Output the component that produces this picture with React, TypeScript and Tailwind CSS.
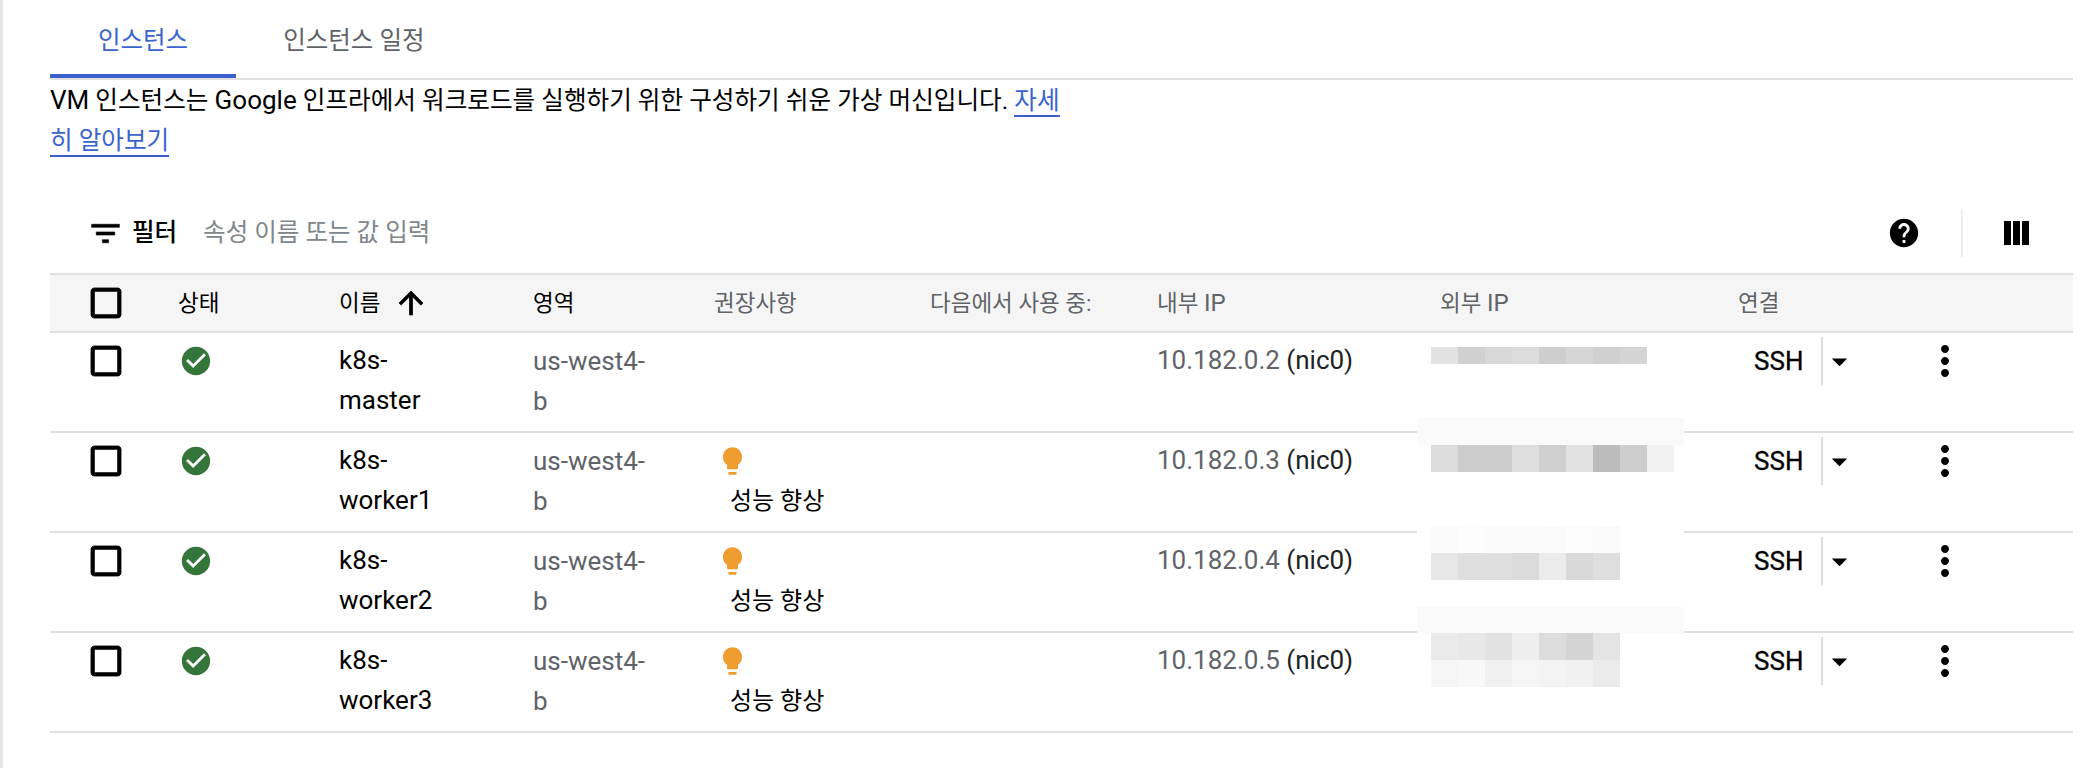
import React from "react";

const FONT = "font-['Roboto','Noto_Sans_CJK_KR',sans-serif]";

function Icon({ d, className, weight = 0 }: { d: string; className: string; weight?: number }) {
  return (
    <svg viewBox="0 0 24 24" fill="currentColor" stroke="currentColor" strokeWidth={weight} className={className}>
      <path d={d} />
    </svg>
  );
}

const P = {
  filter: "M10 18h4v-2h-4v2zM3 6v2h18V6H3zm3 7h12v-2H6v2z",
  help: "M12 2C6.48 2 2 6.48 2 12s4.48 10 10 10 10-4.48 10-10S17.52 2 12 2zm1 17h-2v-2h2v2zm2.07-7.75l-.9.92C13.45 12.9 13 13.5 13 15h-2v-.5c0-1.1.45-2.1 1.17-2.83l1.24-1.26c.37-.36.59-.86.59-1.41 0-1.1-.9-2-2-2s-2 .9-2 2H8c0-2.21 1.79-4 4-4s4 1.79 4 4c0 .88-.36 1.68-.93 2.25z",
  check: "M12 2C6.48 2 2 6.48 2 12s4.48 10 10 10 10-4.48 10-10S17.52 2 12 2zm-2 15l-5-5 1.41-1.41L10 14.17l7.59-7.59L19 8l-9 9z",
  arrowUp: "M4 12l1.41 1.41L11 7.83V20h2V7.83l5.58 5.59L20 12l-8-8-8 8z",
  box: "M19 5v14H5V5h14m0-2H5c-1.1 0-2 .9-2 2v14c0 1.1.9 2 2 2h14c1.1 0 2-.9 2-2V5c0-1.1-.9-2-2-2z",
  bulb: "M9 21c0 .55.45 1 1 1h4c.55 0 1-.45 1-1v-1H9v1zm3-19C8.14 2 5 5.14 5 9c0 2.38 1.19 4.47 3 5.74V17c0 .55.45 1 1 1h6c.55 0 1-.45 1-1v-2.26c1.81-1.27 3-3.36 3-5.74 0-3.86-3.14-7-7-7z",
  more: "M12 8c1.1 0 2-.9 2-2s-.9-2-2-2-2 .9-2 2 .9 2 2 2zm0 2c-1.1 0-2 .9-2 2s.9 2 2 2 2-.9 2-2-.9-2-2-2zm0 6c-1.1 0-2 .9-2 2s.9 2 2 2 2-.9 2-2-.9-2-2-2z",
  drop: "M7 10l5 5 5-5z",
};

// mosaic over the external IP; each band is one row of cells
type Band = { top: string; cells: string[] };

function Mosaic({ bands }: { bands: Band[] }) {
  return (
    <>
      {bands.map((band, i) => (
        <div key={i} className={`absolute left-[-9px] flex ${band.top}`}>
          {band.cells.map((c, j) => (
            <div key={j} className={`h-[27px] w-[27px] ${c}`} />
          ))}
        </div>
      ))}
    </>
  );
}

const rows = [
  {
    name: "master",
    ip: "10.182.0.2",
    rec: false,
    patch: "",
    bands: [
      {
        top: "top-[14px] h-[17px] overflow-hidden",
        cells: ["bg-[#e2e2e2]", "bg-[#d0d0d0]", "bg-[#d8d8d8]", "bg-[#dcdcdc]", "bg-[#cecece]", "bg-[#d6d6d6]", "bg-[#d0d0d0]", "bg-[#d4d4d4]"],
      },
    ],
  },
  {
    name: "worker1",
    ip: "10.182.0.3",
    rec: true,
    patch: "top-[-15px] bg-[#fafafa]",
    bands: [
      {
        top: "top-[12px]",
        cells: ["bg-[#dcdcdc]", "bg-[#cccccc]", "bg-[#cccccc]", "bg-[#dedede]", "bg-[#cfcfcf]", "bg-[#e2e2e2]", "bg-[#bcbcbc]", "bg-[#cdcdcd]", "bg-[#f2f2f2]"],
      },
    ],
  },
  {
    name: "worker2",
    ip: "10.182.0.4",
    rec: true,
    patch: "top-[-7px] bg-white",
    bands: [
      {
        top: "top-[-7px]",
        cells: ["bg-[#fbfbfb]", "bg-[#fdfdfd]", "bg-[#fbfbfb]", "bg-[#fbfbfb]", "bg-[#fafafa]", "bg-[#fcfcfc]", "bg-[#fafafa]"],
      },
      {
        top: "top-[20px]",
        cells: ["bg-[#e6e6e6]", "bg-[#dfdfdf]", "bg-[#dfdfdf]", "bg-[#dbdbdb]", "bg-[#ebebeb]", "bg-[#d9d9d9]", "bg-[#dedede]"],
      },
    ],
  },
  {
    name: "worker3",
    ip: "10.182.0.5",
    rec: true,
    patch: "top-[-26px] bg-[#fafafa]",
    bands: [
      {
        top: "top-[0px]",
        cells: ["bg-[#eaeaea]", "bg-[#e8e8e8]", "bg-[#e2e2e2]", "bg-[#eeeeee]", "bg-[#dcdcdc]", "bg-[#d4d4d4]", "bg-[#e4e4e4]"],
      },
      {
        top: "top-[27px]",
        cells: ["bg-[#f5f5f5]", "bg-[#f8f8f8]", "bg-[#f0f0f0]", "bg-[#f5f5f5]", "bg-[#f3f3f3]", "bg-[#f1f1f1]", "bg-[#ebebeb]"],
      },
    ],
  },
];

export default function App() {
  return (
    <div className={`${FONT} h-[768px] w-[2096px] overflow-hidden border-l-[3px] border-[#e4e4e4] bg-white pl-[47px] pr-[23px] text-[24.5px] leading-[40px] text-black`}>
      {/* Tabs */}
      <div className="flex h-[80px] border-b-2 border-[#e0e0e0]">
        <div className="h-[78px] border-b-4 border-[#3b5fcc] px-[48px] pt-[21px] text-[#3b63d0]">인스턴스</div>
        <div className="pl-[47px] pt-[21px] text-[#5f6368]">인스턴스 일정</div>
      </div>

      {/* Description */}
      <p className="text-[24.6px]">
        <span className="text-[26px]">VM</span> 인스턴스는 <span className="text-[26px]">Google</span> 인프라에서 워크로드를 실행하기 위한 구성하기 쉬운 가상 머신입니다.{" "}
        <span className="border-b-2 border-[#3b5fcc] text-[#3b63d0]">자세</span>
        <br />
        <span className="border-b-2 border-[#3b5fcc] text-[#3b63d0]">히 알아보기</span>
      </p>

      {/* Toolbar */}
      <div className="mt-[32px] flex h-[80px] items-center">
        <Icon d={P.filter} weight={0.4} className="ml-[37px] h-[37px] w-[37px]" />
        <span className="ml-[8px] font-medium">필터</span>
        <span className="ml-[26px] text-[#80868b]">속성 이름 또는 값 입력</span>
        <Icon d={P.help} className="ml-auto h-[34px] w-[34px]" />
        <div className="ml-[40px] h-[48px] w-[2px] bg-[#eeeeee]" />
        <div className="ml-[41px] mr-[44px] flex h-[24px] w-[25px] gap-[2px]">
          <div className="w-[7px] bg-black" />
          <div className="w-[7px] bg-black" />
          <div className="w-[7px] bg-black" />
        </div>
      </div>

      {/* Header */}
      <div className="flex h-[60px] items-center border-y-2 border-[#e0e0e0] bg-[#f5f5f5] text-[22.5px] text-[#5f6368]">
        <div className="w-[128px] pl-[36px]">
          <Icon d={P.box} weight={0.5} className="h-[40px] w-[40px] text-black" />
        </div>
        <div className="w-[161px] text-black">상태</div>
        <div className="flex w-[194px] items-center gap-[13px] text-black">
          이름
          <Icon d={P.arrowUp} weight={0.5} className="h-[36px] w-[36px]" />
        </div>
        <div className="w-[181px] text-black">영역</div>
        <div className="w-[216px]">권장사항</div>
        <div className="w-[227px]">다음에서 사용 중:</div>
        <div className="w-[283px]">
          내부 <span className="text-[24px]">IP</span>
        </div>
        <div className="w-[298px]">
          외부 <span className="text-[24px]">IP</span>
        </div>
        <div>연결</div>
      </div>

      {/* Rows */}
      {rows.map((row) => (
        <div key={row.name} className="flex h-[100px] border-b-2 border-[#e0e0e0] text-[26px]">
          <div className="w-[128px] pl-[36px] pt-[8px]">
            <Icon d={P.box} weight={0.5} className="h-[40px] w-[40px]" />
          </div>
          <div className="w-[161px] pl-[1px] pt-[11px]">
            <Icon d={P.check} className="h-[34px] w-[34px] text-[#34753a]" />
          </div>
          <div className="w-[194px] pt-[7px]">
            k8s-
            <br />
            {row.name}
          </div>
          <div className="w-[181px] pt-[8px] text-[#5f6368]">
            us-west4-
            <br />b
          </div>
          <div className="w-[216px] pt-[8px]">
            {row.rec && (
              <>
                <Icon d={P.bulb} className="ml-[2px] h-[40px] w-[33px] text-[#f09d2f]" />
                <div className="pl-[16px] text-[24px]">성능 향상</div>
              </>
            )}
          </div>
          <div className="w-[227px]" />
          <div className="w-[283px] pt-[7px] text-[#5f6368]">
            {row.ip} <span className="text-[#202124]">(nic0)</span>
          </div>
          <div className="relative w-[298px]">
            {row.patch && <div className={`absolute left-[-23px] h-[27px] w-[267px] ${row.patch}`} />}
            <Mosaic bands={row.bands} />
          </div>
          <div className="flex h-[56px] w-[335px] items-center pl-[16px]">
            <span className="w-[49px] [-webkit-text-stroke:0.3px_black]">SSH</span>
            <div className="ml-[18px] h-[48px] w-[2px] bg-[#dadce0]" />
            <Icon d={P.drop} className="ml-[-2px] h-[37px] w-[37px]" />
            <Icon d={P.more} className="ml-[63px] h-[48px] w-[48px]" />
          </div>
        </div>
      ))}
    </div>
  );
}
